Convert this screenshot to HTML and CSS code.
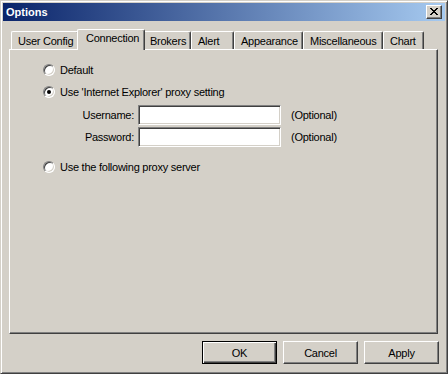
FILE: index.html
```html
<!DOCTYPE html>
<html lang="en">
<head>
    <meta charset="UTF-8">
    <title>Options</title>
    <link rel="stylesheet" href="styles.css">
</head>
<body>

<div class="window">
    <div class="titlebar">
        <span class="title">Options</span>
        <button class="close-btn" title="Close">
            <svg width="8" height="7" viewBox="0 0 8 7">
                <path d="M0 0h2v1h-2z M6 0h2v1h-2z M1 1h2v1h-2z M5 1h2v1h-2z M2 2h4v1h-4z M3 3h2v1h-2z M2 4h4v1h-4z M1 5h2v1h-2z M5 5h2v1h-2z M0 6h2v1h-2z M6 6h2v1h-2z" fill="#000"/>
            </svg>
        </button>
    </div>

    <div class="tabs">
        <div class="tab" style="width: 68px">User Config</div>
        <div class="tab active" style="width: 68px">Connection</div>
        <div class="tab" style="width: 48px">Brokers</div>
        <div class="tab" style="width: 43px">Alert</div>
        <div class="tab" style="width: 69px">Appearance</div>
        <div class="tab" style="width: 80px">Miscellaneous</div>
        <div class="tab" style="width: 41px">Chart</div>
    </div>

    <div class="panel">
        <div class="radio-row row-first">
            <span class="radio"></span>
            <span>Default</span>
        </div>
        <div class="radio-row">
            <span class="radio checked"></span>
            <span>Use 'Internet Explorer' proxy setting</span>
        </div>

        <div class="fields">
            <div class="field">
                <label for="username">Username:</label>
                <input type="text" id="username">
                <span class="hint">(Optional)</span>
            </div>
            <div class="field">
                <label for="password">Password:</label>
                <input type="password" id="password">
                <span class="hint">(Optional)</span>
            </div>
        </div>

        <div class="radio-row row-last">
            <span class="radio"></span>
            <span>Use the following proxy server</span>
        </div>
    </div>

    <div class="buttons">
        <button class="btn default">OK</button>
        <button class="btn">Cancel</button>
        <button class="btn">Apply</button>
    </div>
</div>

</body>
</html>
```

FILE: styles.css
```css
body {
    margin: 0;
    padding: 0;
    background-color: #d4d0c8;
    font-family: "Liberation Sans", Arial, sans-serif;
    font-size: 11px;
    letter-spacing: -0.25px;
    color: #000;
}
.window {
    width: 448px;
    height: 374px;
    box-sizing: border-box;
    background-color: #d4d0c8;
    border: 1px solid;
    border-color: #d4d0c8 #404040 #404040 #d4d0c8;
    box-shadow: inset 1px 1px #fff, inset -1px -1px #808080;
    padding: 2px 2px;
    display: flex;
    flex-direction: column;
}
.titlebar {
    height: 18px;
    flex-shrink: 0;
    background: linear-gradient(to right, #0a246a, #a6caf0);
    display: flex;
    align-items: center;
    justify-content: space-between;
    padding: 0 3px 0 3px;
}
.title {
    color: #fff;
    font-weight: bold;
    font-size: 11px;
    letter-spacing: 0;
}
.close-btn {
    width: 16px;
    height: 14px;
    padding: 0;
    margin: 0;
    border: 1px solid;
    border-color: #fff #404040 #404040 #fff;
    box-shadow: inset -1px -1px #808080;
    background-color: #d4d0c8;
    display: flex;
    align-items: center;
    justify-content: center;
}
.close-btn svg {
    display: block;
    margin: 0 1px 1px 0;
}

/* tab strip */
.tabs {
    display: flex;
    align-items: flex-end;
    flex-shrink: 0;
    height: 20px;
    margin: 8px 0 0 6px;
    padding-left: 2px;
    position: relative;
    z-index: 1;
}
.tab {
    height: 18px;
    flex-shrink: 0;
    box-sizing: border-box;
    padding: 3px 0 0 6px;
    border-top: 1px solid #fff;
    border-left: 1px solid #fff;
    border-right: 1px solid #404040;
    box-shadow: inset -1px 0 #808080;
    border-radius: 2px 2px 0 0;
    white-space: nowrap;
}
.tab.active {
    height: 21px;
    margin: 0 -2px -1px -2px;
    padding: 2px 0 0 8px;
    background-color: #d4d0c8;
    position: relative;
    z-index: 2;
}

/* page content */
.panel {
    height: 285px;
    flex-shrink: 0;
    margin: 0 7px 0 6px;
    box-sizing: border-box;
    border: 1px solid;
    border-color: #fff #404040 #404040 #fff;
    box-shadow: inset -1px -1px #808080;
    padding: 13px 0 0 33px;
}
.radio-row {
    display: flex;
    align-items: center;
    gap: 5px;
    height: 13px;
    margin-top: 9px;
}
.radio-row.row-first {
    margin-top: 0;
}
.radio-row.row-last {
    margin-top: 13px;
}
.radio {
    width: 12px;
    height: 12px;
    box-sizing: border-box;
    border-radius: 50%;
    border: 1px solid;
    border-color: #808080 #fff #fff #808080;
    box-shadow: inset 1px 1px #404040, inset -1px -1px #d4d0c8;
    background-color: #fff;
    display: flex;
    align-items: center;
    justify-content: center;
}
.radio.checked::after {
    content: "";
    width: 4px;
    height: 4px;
    border-radius: 50%;
    background-color: #000;
}
.fields {
    display: flex;
    flex-direction: column;
    gap: 2px;
    margin-top: 7px;
}
.field {
    display: flex;
    align-items: center;
}
.field label {
    width: 91px;
    text-align: right;
    margin-right: 4px;
}
.field input {
    width: 143px;
    height: 20px;
    box-sizing: border-box;
    margin: 0;
    padding: 1px 3px;
    border: 1px solid;
    border-color: #808080 #fff #fff #808080;
    box-shadow: inset 1px 1px #404040, inset -1px -1px #d4d0c8;
    background-color: #fff;
    font-family: inherit;
    font-size: 11px;
    outline: none;
}
.hint {
    margin-left: 10px;
}

/* dialog buttons */
.buttons {
    display: flex;
    justify-content: flex-end;
    gap: 6px;
    margin: 7px 6px 0 0;
}
.btn {
    width: 75px;
    height: 23px;
    box-sizing: border-box;
    padding: 0;
    border: 1px solid;
    border-color: #fff #404040 #404040 #fff;
    box-shadow: inset -1px -1px #808080;
    background-color: #d4d0c8;
    font-family: inherit;
    font-size: 11px;
    letter-spacing: -0.25px;
    color: #000;
}
.btn.default {
    border-color: #000;
    box-shadow: inset 1px 1px #fff, inset -1px -1px #404040, inset -2px -2px #808080;
}
```
